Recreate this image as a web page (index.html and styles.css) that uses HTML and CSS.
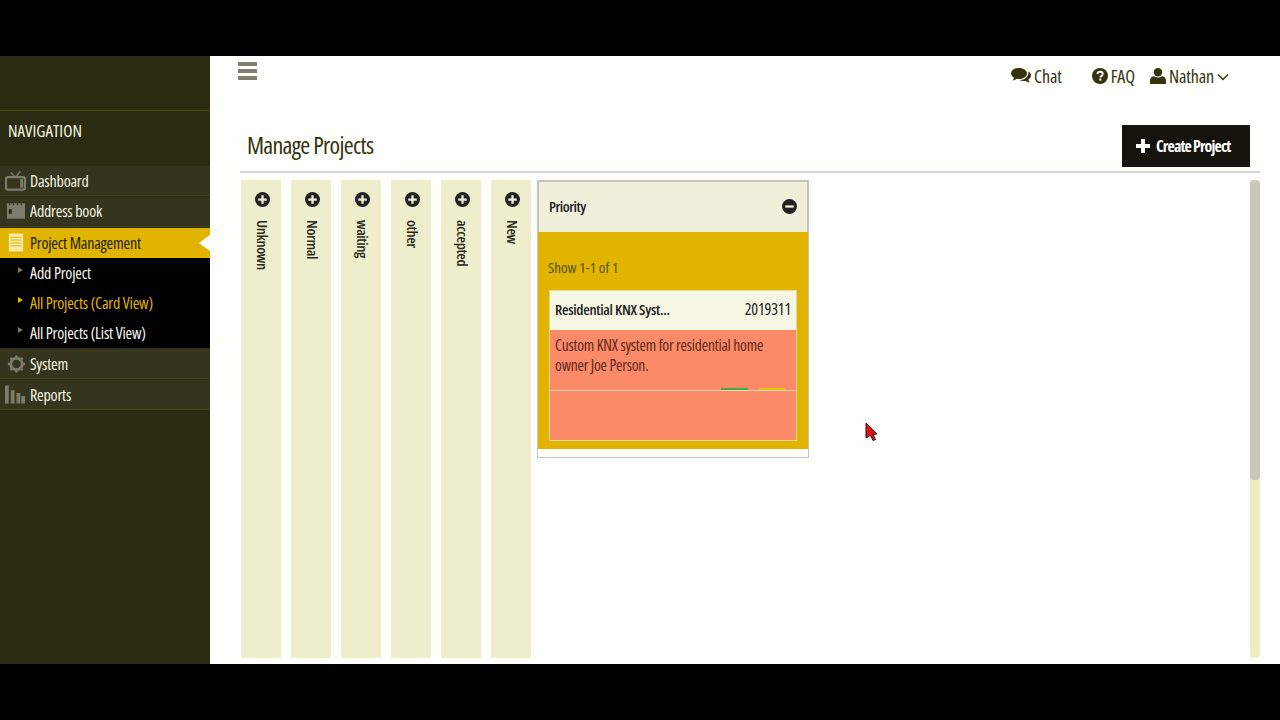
FILE: index.html
```html
<!DOCTYPE html>
<html lang="en">
<head>
  <meta charset="UTF-8" />
  <title>Manage Projects</title>
  <link rel="stylesheet" href="styles.css">
</head>
<body>
  <div class="app">
    <aside class="sidebar">
      <div class="nav-title">NAVIGATION</div>
      <ul class="nav">
        <li class="nav-item">
          <svg class="nav-icon" viewBox="0 0 22 20"><path d="M6 1l5 5 5-6" fill="none" stroke="#7c7c6c" stroke-width="1.5"/><rect x="1" y="6" width="20" height="13" rx="2" fill="none" stroke="#7c7c6c" stroke-width="2.400"/><rect x="16" y="8" width="3" height="9" fill="#7c7c6c"/></svg>
          Dashboard
        </li>
        <li class="nav-item">
          <svg class="nav-icon" viewBox="0 0 22 20"><rect x="2" y="2" width="19" height="16" fill="#7c7c6c"/><rect x="4" y="8" width="3" height="5" fill="#2a2a10"/><path d="M5 2v2M9 2v2M13 2v2M17 2v2" stroke="#2a2a10"/></svg>
          Address book
        </li>
        <li class="nav-item active">
          <svg class="nav-icon" viewBox="0 0 22 20"><rect x="4" y="0" width="15" height="19" rx="1" fill="#f4e8a4"/><path d="M6 4h11M6 7h11M6 10h11M6 13h11" stroke="#e0b400"/></svg>
          Project Management
        </li>
        <li class="sub-list">
          <div class="sub-item">Add Project</div>
          <div class="sub-item current">All Projects (Card View)</div>
          <div class="sub-item">All Projects (List View)</div>
        </li>
        <li class="nav-item">
          <svg class="nav-icon" viewBox="0 0 22 20"><circle cx="12" cy="10" r="6" fill="none" stroke="#7c7c6c" stroke-width="3"/><path d="M12 1v3M12 16v3M3 10h3M18 10h3M5.600 3.600l2.200 2.200M16.200 14.200l2.200 2.200M5.600 16.400l2.200-2.200M16.200 5.800l2.200-2.200" stroke="#7c7c6c" stroke-width="2.400"/></svg>
          System
        </li>
        <li class="nav-item">
          <svg class="nav-icon" viewBox="0 0 22 20"><path d="M0 0h4v19H0zM6 5h4v14H6zM12 8h4v11h-4zM17 11h4v8h-4z" fill="#7c7c6c"/></svg>
          Reports
        </li>
      </ul>
    </aside>

    <main class="main">
      <header class="topbar">
        <svg class="menu-icon" viewBox="0 0 19 18"><path d="M0 0h19v4H0zM0 7h19v4H0zM0 14h19v4H0z" fill="#808070"/></svg>
        <nav class="top-links">
          <span class="top-link chat">
            <svg class="top-icon wide" viewBox="0 0 20 16"><path d="M8 0c4.400 0 8 2.400 8 5.500S12.400 11 8 11c-.8 0-1.500-.1-2.200-.2C4.800 11.700 3.400 12.300 1.500 12.500c.8-.8 1.300-1.700 1.500-2.800C1.200 8.700 0 7.200 0 5.500 0 2.400 3.600 0 8 0z" fill="#333310"/><path d="M17.300 3.600C19 4.600 20 6 20 7.600c0 1.600-1 3-2.700 4 .2 1.100.7 2 1.500 2.900-1.800-.2-3.200-.9-4.200-1.800-.6.100-1.300.2-2 .2-1.600 0-3-.3-4.200-.9 4.800.3 9.500-2.500 8.900-8.400z" fill="#333310"/></svg>
            Chat
          </span>
          <span class="top-link">
            <svg class="top-icon" viewBox="0 0 16 16"><circle cx="8" cy="8" r="8" fill="#333310"/><path d="M5.400 6c.2-1.400 1.200-2.200 2.700-2.200 1.500 0 2.600.9 2.600 2.200 0 1.900-2.300 1.800-2.300 3.400" fill="none" stroke="#fff" stroke-width="1.900"/><rect x="7.300" y="10.600" width="2" height="2" fill="#fff"/></svg>
            FAQ
          </span>
          <span class="top-link">
            <svg class="top-icon" viewBox="0 0 16 16"><circle cx="8" cy="4.200" r="4.200" fill="#333310"/><path d="M0 16v-3.500C0 10 2 8.300 4 8.300c1.200.8 2.500 1.200 4 1.200s2.800-.4 4-1.200c2 0 4 1.700 4 4.200V16z" fill="#333310"/></svg>
            Nathan
            <svg class="chevron" viewBox="0 0 12 8"><path d="M1 1.500l5 5 5-5" fill="none" stroke="#333310" stroke-width="1.500"/></svg>
          </span>
        </nav>
      </header>

      <div class="page-head">
        <h1 class="page-title">Manage Projects</h1>
        <button class="create-btn">
          <svg class="plus" viewBox="0 0 14 14"><path d="M5 0h4v5h5v4H9v5H5V9H0V5h5z" fill="#fff"/></svg>
          Create Project
        </button>
      </div>

      <section class="board">
        <div class="lane"><svg class="lane-icon" viewBox="0 0 16 16"><circle cx="8" cy="8" r="8" fill="#222"/><path d="M6.800 3.500h2.400v3.300h3.300v2.400H9.200v3.300H6.800V9.200H3.500V6.800h3.300z" fill="#f2f2d8"/></svg><span class="lane-name">Unknown</span></div>
        <div class="lane"><svg class="lane-icon" viewBox="0 0 16 16"><circle cx="8" cy="8" r="8" fill="#222"/><path d="M6.800 3.500h2.400v3.300h3.300v2.400H9.200v3.300H6.800V9.200H3.500V6.800h3.300z" fill="#f2f2d8"/></svg><span class="lane-name">Normal</span></div>
        <div class="lane"><svg class="lane-icon" viewBox="0 0 16 16"><circle cx="8" cy="8" r="8" fill="#222"/><path d="M6.800 3.500h2.400v3.300h3.300v2.400H9.200v3.300H6.800V9.200H3.500V6.800h3.300z" fill="#f2f2d8"/></svg><span class="lane-name">waiting</span></div>
        <div class="lane"><svg class="lane-icon" viewBox="0 0 16 16"><circle cx="8" cy="8" r="8" fill="#222"/><path d="M6.800 3.500h2.400v3.300h3.300v2.400H9.200v3.300H6.800V9.200H3.500V6.800h3.300z" fill="#f2f2d8"/></svg><span class="lane-name">other</span></div>
        <div class="lane"><svg class="lane-icon" viewBox="0 0 16 16"><circle cx="8" cy="8" r="8" fill="#222"/><path d="M6.800 3.500h2.400v3.300h3.300v2.400H9.200v3.300H6.800V9.200H3.500V6.800h3.300z" fill="#f2f2d8"/></svg><span class="lane-name">accepted</span></div>
        <div class="lane"><svg class="lane-icon" viewBox="0 0 16 16"><circle cx="8" cy="8" r="8" fill="#222"/><path d="M6.800 3.500h2.400v3.300h3.300v2.400H9.200v3.300H6.800V9.200H3.500V6.800h3.300z" fill="#f2f2d8"/></svg><span class="lane-name">New</span></div>

        <div class="panel">
          <div class="panel-head">
            <span class="panel-title">Priority</span>
            <svg class="lane-icon" viewBox="0 0 16 16"><circle cx="8" cy="8" r="8" fill="#222"/><rect x="3.500" y="6.800" width="9" height="2.400" fill="#f2f2d8"/></svg>
          </div>
          <div class="panel-body">
            <div class="show-count">Show 1-1 of 1</div>
            <div class="card">
              <div class="card-head">
                <span class="card-name">Residential KNX Syst...</span>
                <span class="card-num">2019311</span>
              </div>
              <div class="card-text">
                <p>Custom KNX system for residential home owner Joe Person.</p>
                <div class="card-bars"><span class="bar green"></span><span class="bar yellow"></span></div>
              </div>
              <div class="card-foot"></div>
            </div>
          </div>
        </div>

        <div class="scroll-track"><div class="scroll-thumb"></div></div>
      </section>
    </main>

    <svg class="cursor" viewBox="0 0 13 20"><path d="M1 1l11 11-4 .5 2.500 5-2.500 1-2.500-5L1 16z" fill="#e01010" stroke="#30101a"/></svg>
  </div>
</body>
</html>
```

FILE: styles.css
```css
:root {
  --ink: #333310;
  --active: #e0b400;
  --narrow: "Open Sans", sans-serif;
}

body {
  margin: 0;
  height: 720px;
  overflow: hidden;
  background: #000;
  padding: 56px 0;
  box-sizing: border-box;
  font-family: var(--narrow);
  font-stretch: condensed;
  color: var(--ink);
}

.app {
  position: relative;
  display: flex;
  height: 608px;
  background: #fefefb;
}

.sidebar {
  width: 210px;
  flex-shrink: 0;
  padding-top: 54px;
  box-sizing: border-box;
  background: #2b2b12;
}

.nav-title {
  border-top: 1px solid #4a4a14;
  height: 55px;
  line-height: 40px;
  padding-left: 8px;
  font-size: 17px;
  color: #f4f4e0;
}

.nav {
  list-style: none;
  margin: 0;
  padding: 0;
}

.nav-item {
  position: relative;
  display: flex;
  align-items: center;
  gap: 4px;
  height: 30px;
  margin-bottom: 1px;
  padding-left: 5px;
  font-size: 16px;
  letter-spacing: -0.2px;
  color: #f4f4e0;
  border-bottom: 1px solid #44441a;
  box-sizing: border-box;
  background: #35351e;
}

.nav-item:nth-child(2) {
  padding-bottom: 2px;
}

.nav-item.active {
  background: var(--active);
  color: #222210;
  border-bottom: 0;
  margin-bottom: 0;
}

.nav-item.active::after {
  content: "";
  position: absolute;
  right: 0;
  top: 7px;
  border: 8px solid transparent;
  border-left: 0;
  border-right: 11px solid #fefefb;
}

.nav-icon {
  width: 21px;
  height: 20px;
  flex-shrink: 0;
}

.sub-list {
  background: #000;
  height: 90px;
  margin-bottom: 1px;
}

.sub-item {
  position: relative;
  height: 30px;
  line-height: 30px;
  padding-left: 30px;
  font-size: 16px;
  letter-spacing: -0.2px;
  color: #f8f8f0;
}

.sub-item::before {
  content: "";
  position: absolute;
  left: 18px;
  top: 9px;
  border: 3px solid transparent;
  border-left: 5px solid #77775a;
  border-right: 0;
}

.sub-item.current {
  color: var(--active);
}

.sub-item.current::before {
  border-left-color: var(--active);
}

.main {
  flex: 1;
  min-width: 0;
  padding: 0 20px 6px 30px;
  display: flex;
  flex-direction: column;
}

.topbar {
  display: flex;
  justify-content: space-between;
  height: 69px;
  margin-left: -2px;
  padding-top: 6px;
  box-sizing: border-box;
}

.menu-icon {
  width: 19px;
  height: 18px;
}

.top-links {
  display: flex;
  gap: 15px;
  margin-right: 31px;
  padding-top: 3px;
  font-size: 18px;
}

.top-link {
  display: flex;
  align-items: flex-start;
  gap: 3px;
  line-height: 22px;
  letter-spacing: -0.1px;
}

.top-link.chat {
  margin-right: 15px;
}

.top-icon {
  width: 16px;
  height: 16px;
  margin-top: 3px;
}

.top-icon.wide {
  width: 20px;
}

.chevron {
  width: 12px;
  height: 8px;
  margin-top: 8px;
}

.page-head {
  display: flex;
  justify-content: space-between;
  align-items: center;
  height: 48px;
  padding: 0 10px 5px 7px;
  border-bottom: 2px solid #d4d4d8;
  box-sizing: border-box;
}

.page-title {
  margin: 0 0 3px;
  font-size: 24px;
  font-weight: 400;
  letter-spacing: -0.7px;
}

.create-btn {
  display: flex;
  align-items: center;
  gap: 6px;
  width: 128px;
  height: 42px;
  padding: 0 0 0 14px;
  border: 0;
  background: #14140c;
  color: #fff;
  font: 700 16px var(--narrow);
  font-stretch: condensed;
  letter-spacing: -0.9px;
}

.plus {
  width: 14px;
  height: 14px;
}

.board {
  flex: 1;
  display: flex;
  align-items: flex-start;
  gap: 10px;
  margin-top: 7px;
  padding-left: 1px;
}

.lane {
  width: 40px;
  height: 478px;
  padding: 12px 0 0 2px;
  box-sizing: border-box;
  display: flex;
  flex-direction: column;
  align-items: center;
  gap: 13px;
  background: #eeeecc;
}

.lane-icon {
  width: 15px;
  height: 15px;
  flex-shrink: 0;
}

.lane-name {
  writing-mode: vertical-rl;
  font-size: 15px;
  font-weight: 600;
  letter-spacing: -0.4px;
  margin-left: 1px;
  color: #2a2a20;
}

.panel {
  width: 272px;
  margin-left: -4px;
  border: 1px solid #c4c4c8;
  padding-bottom: 8px;
  background: #fefefb;
  box-sizing: border-box;
}

.panel-head {
  display: flex;
  justify-content: space-between;
  align-items: center;
  height: 51px;
  padding: 0 10px 2px;
  border: 1px solid #c4c4b0;
  border-bottom: 0;
  box-sizing: border-box;
  background: #f0f0da;
}

.panel-title {
  font-size: 15px;
  font-weight: 600;
  letter-spacing: -0.5px;
  color: #222;
}

.panel-body {
  height: 217px;
  padding: 25px 11px 0;
  box-sizing: border-box;
  background: var(--active);
}

.show-count {
  height: 33px;
  margin-left: -1px;
  font-size: 15px;
  line-height: 20px;
  color: #55500a;
}

.card {
  border: 1px solid #e8d890;
}

.card-head {
  display: flex;
  justify-content: space-between;
  align-items: center;
  height: 39px;
  padding: 0 5px 3px;
  box-sizing: border-box;
  background: #f6f6e4;
  font-size: 15px;
  color: #222;
}

.card-name {
  font-weight: 600;
  letter-spacing: -0.3px;
}

.card-num {
  font-size: 16px;
  letter-spacing: -0.2px;
}

.card-text,
.card-foot {
  background: #fb8a68;
}

.card-text {
  position: relative;
  height: 61px;
  padding: 5px 20px 0 5px;
  box-sizing: border-box;
  border-bottom: 1px solid #e8d8b0;
  font-size: 15.5px;
  line-height: 20px;
  letter-spacing: -0.2px;
  color: #60281c;
}

.card-text p {
  margin: 0;
}

.card-bars {
  position: absolute;
  right: 11px;
  bottom: 0;
  display: flex;
  gap: 11px;
}

.bar {
  width: 27px;
  height: 2px;
}

.bar.green {
  background: #3fae4a;
}

.bar.yellow {
  width: 26px;
  background: #e0c800;
}

.card-foot {
  height: 49px;
}

.scroll-track {
  width: 10px;
  height: 478px;
  margin-left: auto;
  border-radius: 4px;
  background: #eeeec4;
}

.scroll-thumb {
  height: 300px;
  border-radius: 4px;
  background: #c8c8bc;
}

.cursor {
  position: absolute;
  left: 865px;
  top: 366px;
  width: 13px;
  height: 20px;
}
```
